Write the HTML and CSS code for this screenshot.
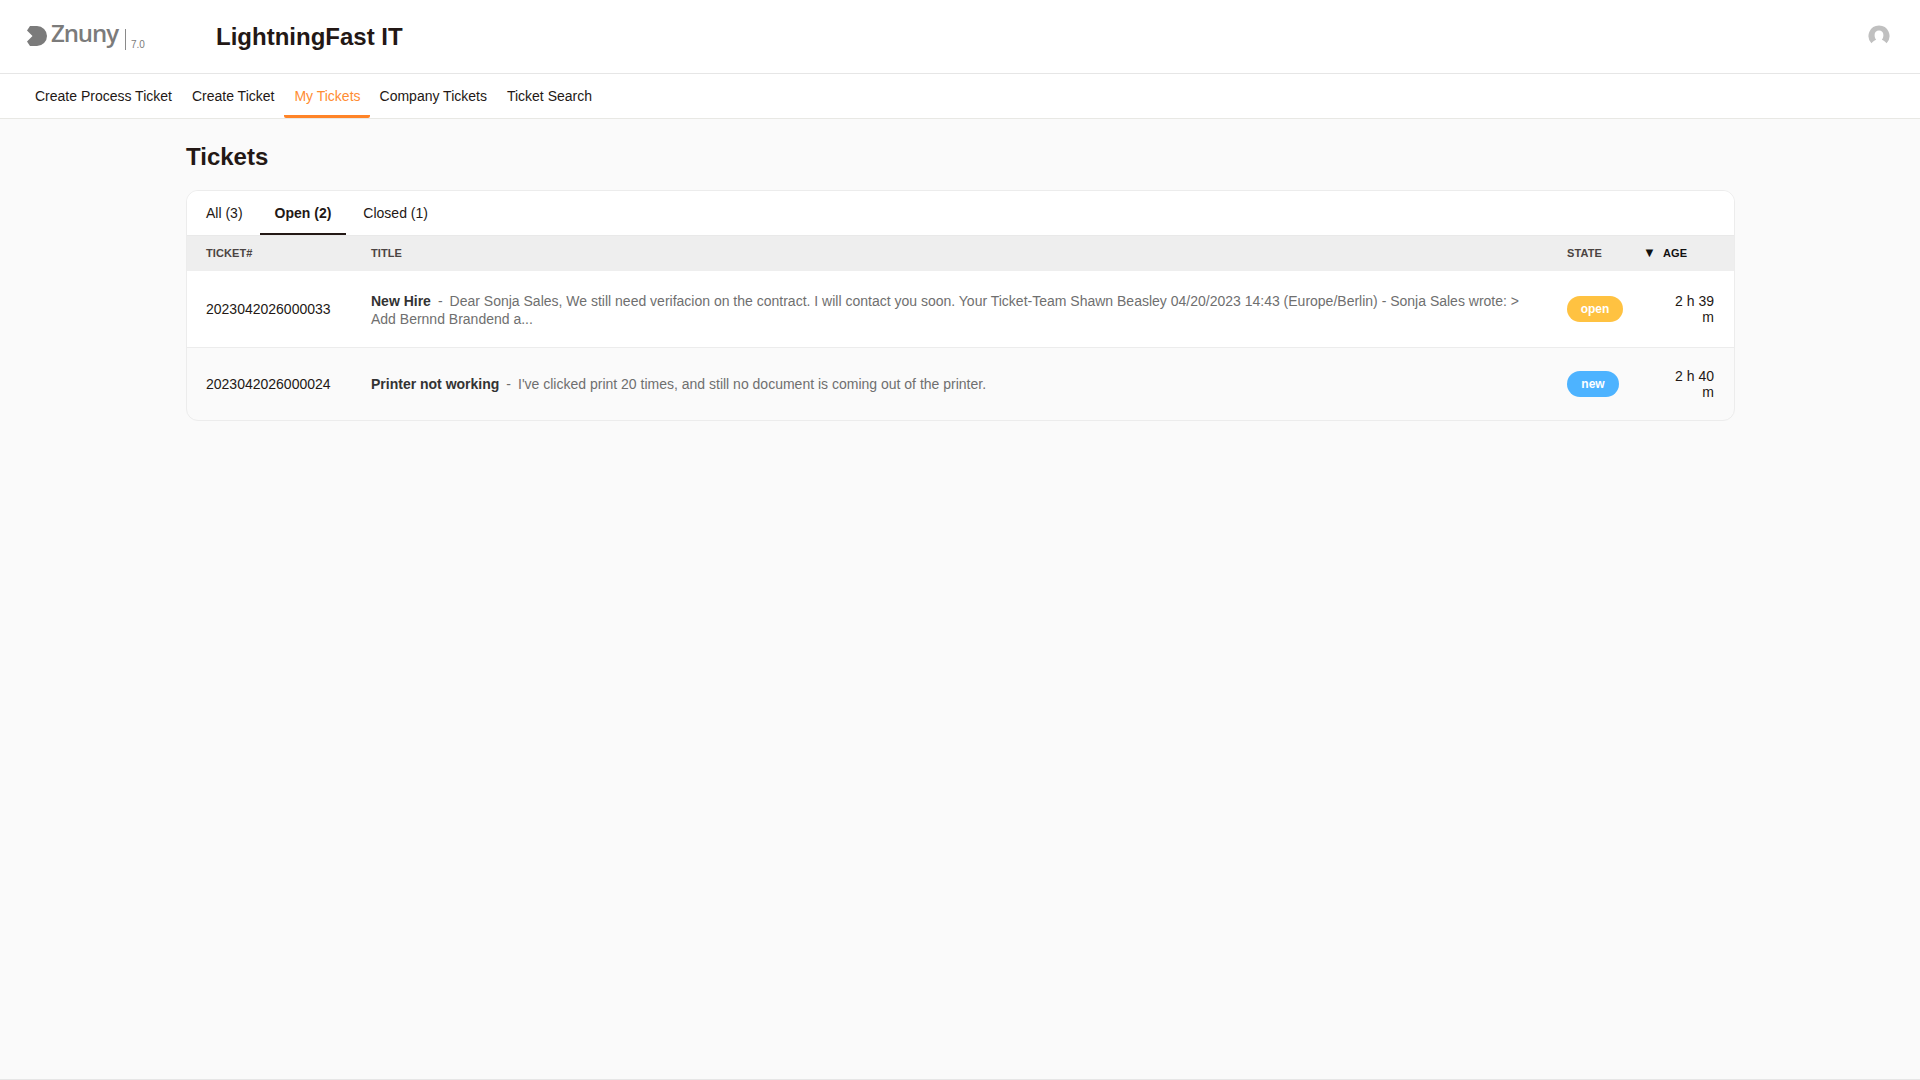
FILE: index.html
```html
<!DOCTYPE html>
<html lang="en">
<head>
<meta charset="utf-8">
<title>Tickets</title>
<link rel="stylesheet" href="styles.css">
</head>
<body>
<div class="page">
  <header class="header">
    <div class="logo">
      <svg class="logo-mark" width="20" height="20" viewBox="0 0 20 20"><path d="M3 0H10A10 10 0 0 1 10 20H3L0 15.5 5.5 10 0 4.5Z" fill="#7b7b7b"/></svg>
      <span class="logo-name">Znuny</span>
      <span class="logo-sep"></span>
      <span class="logo-ver">7.0</span>
    </div>
    <div class="company">LightningFast IT</div>
    <svg class="avatar" width="22" height="22" viewBox="0 0 22 22"><path d="M11 0.5A10.5 10.5 0 0 0 3.4 18.2C5 16.4 6.8 15.6 8.2 14.8 7 13.4 6.6 11.6 6.6 10 6.6 7.4 8.4 5.6 11 5.6S15.4 7.4 15.4 10C15.4 11.6 15 13.4 13.8 14.8 15.2 15.6 17 16.4 18.6 18.2A10.5 10.5 0 0 0 11 0.5Z" fill="#c0c0c0"/></svg>
  </header>
  <nav class="nav">
    <a class="nav-item">Create Process Ticket</a>
    <a class="nav-item">Create Ticket</a>
    <a class="nav-item active">My Tickets</a>
    <a class="nav-item">Company Tickets</a>
    <a class="nav-item">Ticket Search</a>
  </nav>
  <main class="main">
    <h1 class="title">Tickets</h1>
    <section class="card">
      <div class="tabs">
        <a class="tab first">All (3)</a>
        <a class="tab active">Open (2)</a>
        <a class="tab">Closed (1)</a>
      </div>
      <div class="row head">
        <div class="c-num">TICKET#</div>
        <div class="c-title">TITLE</div>
        <div class="c-state">STATE</div>
        <div class="c-age"><span class="arrow">▼</span><span class="age-label">AGE</span></div>
      </div>
      <div class="row ticket white">
        <div class="c-num">2023042026000033</div>
        <div class="c-title"><b>New Hire</b><span class="dash">-</span>Dear Sonja Sales, We still need verifacion on the contract. I will contact you soon. Your Ticket-Team Shawn Beasley 04/20/2023 14:43 (Europe/Berlin) - Sonja Sales wrote: &gt; Add Bernnd Brandend a...</div>
        <div class="c-state"><span class="pill open">open</span></div>
        <div class="c-age">2 h 39 m</div>
      </div>
      <div class="row ticket">
        <div class="c-num">2023042026000024</div>
        <div class="c-title"><b>Printer not working</b><span class="dash">-</span>I've clicked print 20 times, and still no document is coming out of the printer.</div>
        <div class="c-state"><span class="pill new">new</span></div>
        <div class="c-age">2 h 40 m</div>
      </div>
    </section>
  </main>
  <footer class="footer"></footer>
</div>
</body>
</html>
```
FILE: styles.css
```css
* { box-sizing: border-box; }
html, body { margin: 0; height: 100%; }
body { background: #fafafa; color: #231815; font: 14px/16px "Liberation Sans", Arial, sans-serif; }
.page { min-height: 1080px; display: flex; flex-direction: column; }
.header { height: 74px; background: #fff; border-bottom: 1px solid #e6e6e6; display: flex; align-items: center; padding: 0 30px 0 27px; }
.logo { width: 189px; display: flex; align-items: flex-start; height: 34px; color: #7b7b7b; }
.logo-mark { margin-top: 6px; flex: none; }
.logo-name { font: 600 24px/30px "Open Sans", sans-serif; letter-spacing: -1.1px; margin: -2px 0 0 4px; }
.logo-sep { width: 1px; height: 21px; background: #8a8a8a; margin: 9px 0 0 7px; }
.logo-ver { font-size: 10px; line-height: 10px; margin: 20px 0 0 5px; }
.company { font-size: 24px; line-height: 30px; font-weight: 700; }
.avatar { margin-left: auto; margin-top: -2px; }
.nav { height: 45px; background: #fff; border-bottom: 1px solid #e8e8e4; display: flex; padding-left: 25px; }
.nav-item { padding: 14px 10px 0; height: 44px; color: #231815; }
.nav-item.active { padding-right: 9px; color: #ff8c32; border-bottom: 3px solid #ff8427; border-radius: 0 0 2px 2px; }
.main { width: 1549px; margin-left: 186px; flex: 1; }
.title { margin: 0; padding-top: 23px; font-size: 24px; line-height: 30px; font-weight: 700; }
.card { margin-top: 18px; border: 1px solid #ececec; border-radius: 12px; overflow: hidden; background: #fafafa; }
.tabs { height: 45px; background: #fff; display: flex; padding-left: 4px; border-bottom: 1px solid #e9e9e9; }
.tab { padding: 14px 15px 0; height: 44px; }
.tab.first { margin-right: 2px; }
.tab.active { margin-right: 2px; font-weight: 700; border-bottom: 2px solid #231815; }
.row { display: grid; grid-template-columns: 165px 1196px 77px 1fr; align-items: center; padding-left: 19px; padding-right: 20px; }
.head { height: 35px; padding-bottom: 1px; background: #eeeeee; font-size: 11px; font-weight: 700; letter-spacing: 0.1px; color: #4b4442; }
.ticket { height: 72px; }
.ticket.white { height: 77px; background: #fff; border-bottom: 1px solid #ececec; }
.white .c-title { padding-top: 2px; }
.c-title { padding-right: 40px; color: #6f6f6f; line-height: 18px; }
.c-title b { color: #333; }
.dash { margin: 0 7px; }
.head .c-title { color: #4b4442; padding-top: 0; }
.c-age { text-align: right; color: #231815; padding-left: 30px; }
.head .c-age { text-align: left; padding-left: 0; color: #111; display: flex; align-items: center; }
.arrow { font-size: 13px; margin-right: 7px; margin-left: -1px; }
.pill { display: inline-block; height: 26px; line-height: 26px; border-radius: 13px; color: #fff; font-size: 12px; font-weight: 700; text-align: center; }
.pill.open { width: 56px; background: #ffc241; }
.pill.new { width: 52px; background: #4db3ff; }
.footer { height: 1px; background: #e6e6e6; }
```
